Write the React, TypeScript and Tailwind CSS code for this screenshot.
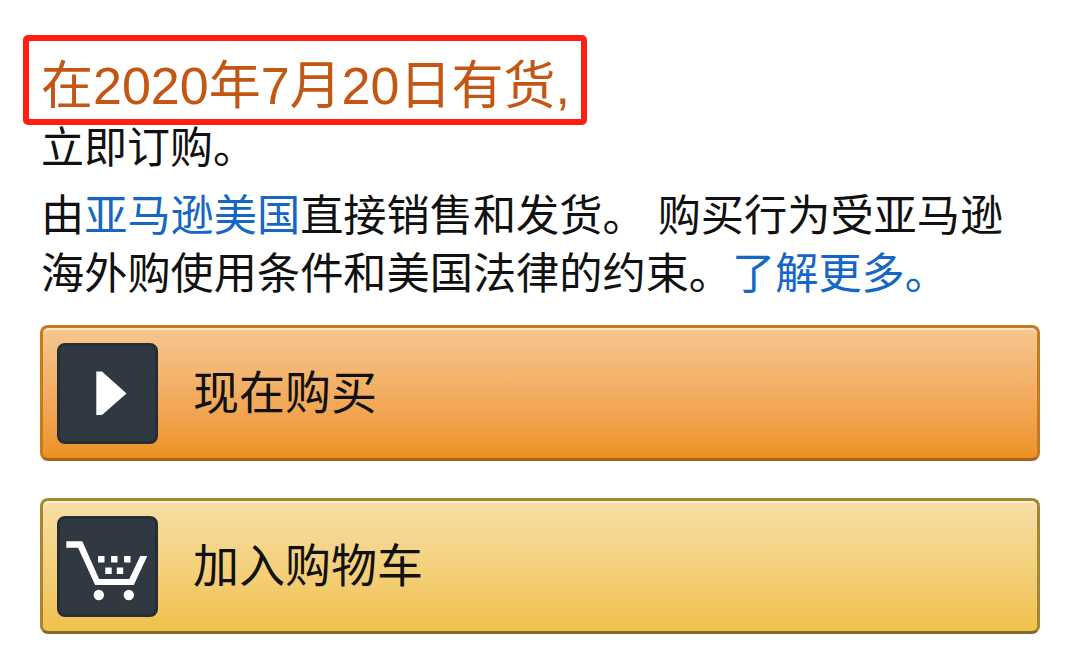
import type { ReactNode } from "react"

interface BuyButtonProps {
  label: string
  className: string
  children: ReactNode
}

function BuyButton({ label, className, children }: BuyButtonProps) {
  return (
    <button
      type="button"
      className={`flex h-[136px] w-full items-center rounded-lg border-3 pl-[14px] text-left ${className}`}
    >
      <span className="flex size-[101px] shrink-0 items-center justify-center rounded-lg border-3 border-[#262d35] bg-[#303841]">
        {children}
      </span>
      <span className="ml-[35px] text-[46px] leading-[60px] whitespace-nowrap">{label}</span>
    </button>
  )
}

const PlayIcon = () => (
  <svg viewBox="0 0 101 101" className="size-[101px] shrink-0" fill="#fff">
    <path d="M39.3 28.5h5.7L69.5 50.5 45 72H39.3z" />
  </svg>
)

const CartIcon = () => (
  <svg viewBox="-0.8 0 101 101" className="size-[101px] shrink-0" fill="#fff">
    <path d="M8.5 25.3H24.5L41.3 63H71.5L82.5 40H89.5L76 69H37.3L20.3 31.7H8.5z" />
    <path d="M40.3 40h6.4v6.4h-6.4zM53.3 40h6.4v6.4h-6.4zM66.3 40h6.4v6.4h-6.4zM47.5 51.5h6.4v6.4h-6.4zM59 51.5h6.4v6.4H59z" />
    <circle cx="41" cy="79" r="5.2" />
    <circle cx="71" cy="79" r="5.2" />
  </svg>
)

export default function App() {
  return (
    <main
      lang="zh-CN"
      className="h-[659px] w-[1080px] overflow-hidden bg-white pt-[35px] font-['Liberation_Sans','Noto_Sans_CJK_SC',sans-serif] text-[#111]"
    >
      {/* Availability */}
      <div className="ml-[23px] flex h-[90px] w-[564px] items-center rounded-[5px] border-6 border-[#ff1e12] pt-[11px] pl-[12px]">
        <h1 className="text-[52px] leading-[66px] whitespace-nowrap text-[#c45614]">在2020年7月20日有货,</h1>
      </div>

      <div className="px-10">
        <p className="pl-px text-[43px] leading-[46px]">立即订购。</p>
        <p className="mt-[17px] pl-px text-[43.2px] leading-[57.5px] whitespace-nowrap">
          由<a className="text-[#1467c6]">亚马逊美国</a>直接销售和发货。 购买行为受亚马逊
          <br />
          海外购使用条件和美国法律的约束。<a className="text-[#1467c6]">了解更多。</a>
        </p>

        <div className="mt-[22px] flex flex-col gap-[37px]">
          <BuyButton
            label="现在购买"
            className="border-[#c67a20] border-b-[#a9651d] bg-linear-to-b from-[#f6c78f] to-[#ed9220] shadow-[inset_0_2px_0_#fbe3c8]"
          >
            <PlayIcon />
          </BuyButton>
          <BuyButton
            label="加入购物车"
            className="border-[#a58632] border-b-[#846b28] bg-linear-to-b from-[#f7dfa5] to-[#f0c14b] shadow-[inset_0_2px_0_#fcefd0]"
          >
            <CartIcon />
          </BuyButton>
        </div>
      </div>
    </main>
  )
}
